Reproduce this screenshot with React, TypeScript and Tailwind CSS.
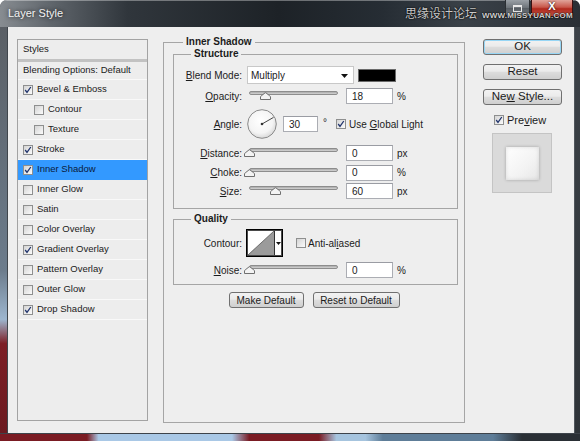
import React from "react";

const U = ({ children }: { children: React.ReactNode }) => (
  <span className="underline underline-offset-[1px]">{children}</span>
);

const Check = ({ on, cls = "" }: { on?: boolean; cls?: string }) => (
  <span
    className={
      "inline-flex items-center justify-center w-[10px] h-[10px] shrink-0 border border-[#8e8f8f] bg-[linear-gradient(135deg,#d4d4d4,#fbfbfb)] " +
      cls
    }
  >
    {on && (
      <svg width="8" height="8" viewBox="0 0 8 8">
        <path d="M1.2 4.0 L3.0 6.4 L6.8 1.0" stroke="#23366e" strokeWidth="1.3" fill="none" />
      </svg>
    )}
  </span>
);

const Slider = ({ pct }: { pct: number }) => (
  <div className="relative w-[89px] h-[16px] ml-[7px] shrink-0">
    <div className="absolute left-0 right-0 top-[3px] h-[4px] rounded-[2px] border border-[#8d8d8d] bg-[linear-gradient(to_bottom,#a9a9a9,#d4d4d4)]" />
    <svg
      className="absolute top-[4px]"
      style={{ left: Math.round(pct * 89) - 5 }}
      width="11"
      height="8"
      viewBox="0 0 11 8"
    >
      <path d="M0.5 7.5 V5 Q0.5 4.4 1.2 3.9 L5 0.9 Q5.5 0.5 6 0.9 L9.8 3.9 Q10.5 4.4 10.5 5 V7.5 Z" fill="#f3f3f3" stroke="#6f6f6f" />
    </svg>
  </div>
);

const Field = ({ v, w = "w-[47px]", cls = "ml-[8px]" }: { v: string; w?: string; cls?: string }) => (
  <div className={"h-[16px] border border-[#abadb3] border-t-[#9a9ca3] bg-white flex items-center pl-[5px] shrink-0 " + w + " " + cls}>
    {v}
  </div>
);

const Label = ({ children }: { children: React.ReactNode }) => (
  <div className="w-[68px] text-right shrink-0">{children}</div>
);

const Btn = ({ children, cls = "" }: { children: React.ReactNode; cls?: string }) => (
  <div
    className={
      "h-[16px] rounded-[3px] border border-[#707070] bg-[linear-gradient(to_bottom,#f2f2f2,#ebebeb_45%,#dddddd_50%,#cfcfcf)] flex items-center justify-center " +
      cls
    }
  >
    <span>{children}</span>
  </div>
);

const items: { t: string; on: boolean; ind?: boolean; sel?: boolean }[] = [
  { t: "Bevel & Emboss", on: true },
  { t: "Contour", on: false, ind: true },
  { t: "Texture", on: false, ind: true },
  { t: "Stroke", on: true },
  { t: "Inner Shadow", on: true, sel: true },
  { t: "Inner Glow", on: false },
  { t: "Satin", on: false },
  { t: "Color Overlay", on: false },
  { t: "Gradient Overlay", on: true },
  { t: "Pattern Overlay", on: false },
  { t: "Outer Glow", on: false },
  { t: "Drop Shadow", on: true },
];

export default function App() {
  return (
    <div className="w-[580px] h-[441px] bg-white font-['Liberation_Sans',Arial,sans-serif] text-[#1b1b1b]">
      <div className="w-[580px] h-[441px] rounded-t-[7px] overflow-hidden flex flex-col bg-[#3a4046]">
        {/* Title bar */}
        <div className="relative h-[27px] shrink-0 flex items-center pl-[8px] bg-[linear-gradient(to_right,#878c91_0%,#5f656b_9%,#30363c_22%,#1d2227_48%,#262d34_66%,#3a4148_80%,#2a2f35_100%)] shadow-[inset_0_1px_0_rgba(255,255,255,0.35)]">
          <span className="text-[11px] text-[#f2f2f2] [text-shadow:0_0_4px_rgba(0,0,0,0.9)]">Layer Style</span>
          <span className="absolute left-[405px] top-[6px] text-[12px] leading-[14px] text-[#c9c9c9] font-['Noto_Sans_CJK_SC',sans-serif] [text-shadow:0_0_2px_#000,0_0_1px_#000]">
            思缘设计论坛
          </span>
          {/* window buttons */}
          <div className="absolute right-[50px] top-0 w-[25px] h-[17px] rounded-bl-[4px] border border-t-0 border-[#2b2f33] bg-[linear-gradient(to_bottom,#9aa0a6,#6c7278_50%,#565c62_51%,#7b8187)] flex items-center justify-center">
            <div className="w-[9px] h-[7px] border border-[#e8e8e8] border-t-2" />
          </div>
          <div className="absolute right-[7px] top-0 w-[42px] h-[17px] rounded-br-[4px] border border-t-0 border-[#3b1010] bg-[linear-gradient(to_bottom,#e0a49a,#c8574a_45%,#b0281c_55%,#c9584a)] flex justify-center items-start pt-[2px]">
            <span className="text-[11px] font-bold leading-[8px] text-white [text-shadow:0_0_2px_#000]">X</span>
          </div>
          <span className="absolute left-[482px] top-[12px] text-[8px] leading-[8px] font-bold tracking-[0.2px] text-[#d0d0d0] [text-shadow:0_0_2px_#000,0_0_1px_#000]">
            WWW.MISSYUAN.COM
          </span>
        </div>

        {/* middle row: frame + client */}
        <div className="flex-1 flex min-h-0">
          <div className="w-[8px] shrink-0 bg-[linear-gradient(to_bottom,#5a5f65_0%,#6c7c8c_60%,#9db6cf_72%,#7d1e25_78%,#6b1a20_100%)] border-r border-[#40464c]" />
          <div className="flex-1 bg-[#eeeeee] flex items-start text-[10px]">
            {/* Left styles list */}
            <div className="mt-[12px] ml-[9px] w-[131px] h-[382px] shrink-0 border border-[#a3a3a3] bg-[#ededed] flex flex-col text-[9.5px]">
              <div className="h-[19px] flex items-center pl-[5px]">Styles</div>
              <div className="h-[3px] bg-[#c2c2c2]" />
              <div className="h-[18px] flex items-center pl-[5px] border-b border-[#f9f9f9]">Blending Options: Default</div>
              {items.map((it) => (
                <div
                  key={it.t}
                  className={
                    "h-[20px] flex items-center gap-[4px] border-b " +
                    (it.ind ? "pl-[16px] " : "pl-[5px] ") +
                    (it.sel ? "bg-[#3399ff] border-[#3399ff] text-[#0a1a3a]" : "border-[#f9f9f9]")
                  }
                >
                  <Check on={it.on} />
                  <span>{it.t}</span>
                </div>
              ))}
            </div>

            {/* Middle */}
            <fieldset className="mt-[9px] ml-[15px] w-[302px] h-[387px] shrink-0 border border-[#a5a5a5] m-0 p-0">
              <legend className="ml-[19px] px-[3px] font-bold text-[10px] leading-[12px]">Inner Shadow</legend>

              <fieldset className="ml-[9px] w-[285px] h-[161px] border border-[#a5a5a5] p-0">
                <legend className="ml-[17px] px-[3px] font-bold text-[10px] leading-[12px]">Structure</legend>
                <div className="pt-[4px] flex flex-col">
                  <div className="h-[22px] flex items-center">
                    <Label>
                      <U>B</U>lend Mode:
                    </Label>
                    <div className="ml-[5px] w-[107px] h-[18px] bg-white border border-[#c8c8c8] flex items-center pl-[3px] relative shrink-0">
                      Multiply
                      <svg className="absolute right-[5px] top-[7px]" width="7" height="4" viewBox="0 0 7 4">
                        <path d="M0 0 H7 L3.5 4 Z" fill="#111" />
                      </svg>
                    </div>
                    <div className="ml-[4px] w-[38px] h-[13px] bg-black border border-[#6a6a6a] shrink-0" />
                  </div>
                  <div className="h-[20px] flex items-center">
                    <Label>
                      <U>O</U>pacity:
                    </Label>
                    <Slider pct={0.18} />
                    <Field v="18" />
                    <span className="ml-[4px]">%</span>
                  </div>
                  <div className="h-[36px] flex items-center">
                    <Label>
                      <U>A</U>ngle:
                    </Label>
                    <svg className="ml-[5px] shrink-0" width="30" height="30" viewBox="0 0 30 30">
                      <defs>
                        <radialGradient id="dial" cx="0.45" cy="0.4" r="0.6">
                          <stop offset="0" stopColor="#ffffff" />
                          <stop offset="0.7" stopColor="#f4f4f4" />
                          <stop offset="1" stopColor="#d9d9d9" />
                        </radialGradient>
                      </defs>
                      <circle cx="15" cy="15" r="14.3" fill="url(#dial)" stroke="#8a8a8a" strokeWidth="1" />
                      <line x1="15" y1="15" x2="26.5" y2="8.4" stroke="#444" strokeWidth="1" />
                      <circle cx="15" cy="15" r="1.3" fill="#333" />
                    </svg>
                    <Field v="30" w="w-[35px]" cls="ml-[6px]" />
                    <span className="ml-[5px] -mt-[4px]">°</span>
                    <Check on cls="ml-[9px]" />
                    <span className="ml-[3px]">
                      Use <U>G</U>lobal Light
                    </span>
                  </div>
                  <div className="h-[22px] flex items-center">
                    <Label>
                      <U>D</U>istance:
                    </Label>
                    <Slider pct={0} />
                    <Field v="0" />
                    <span className="ml-[4px]">px</span>
                  </div>
                  <div className="h-[17px] flex items-center">
                    <Label>
                      <U>C</U>hoke:
                    </Label>
                    <Slider pct={0} />
                    <Field v="0" />
                    <span className="ml-[4px]">%</span>
                  </div>
                  <div className="h-[20px] flex items-center">
                    <Label>
                      <U>S</U>ize:
                    </Label>
                    <Slider pct={0.29} />
                    <Field v="60" />
                    <span className="ml-[4px]">px</span>
                  </div>
                </div>
              </fieldset>

              <fieldset className="mt-[4px] ml-[9px] w-[285px] h-[72px] border border-[#a5a5a5] p-0">
                <legend className="ml-[17px] px-[3px] font-bold text-[10px] leading-[12px]">Quality</legend>
                <div className="pt-[4px] flex flex-col">
                  <div className="h-[28px] flex items-center">
                    <Label>Contour:</Label>
                    <div className="ml-[4px] w-[37px] h-[28px] border border-black shadow-[inset_0_0_0_1px_#4a4a4a] bg-white flex shrink-0">
                      <svg className="ml-[1px] mt-[1px]" width="26" height="24" viewBox="0 0 26 24">
                        <path d="M0 24 L26 0 V24 Z" fill="#9b9b9b" />
                        <path d="M0 24 L26 0" stroke="#555" strokeWidth="0.8" />
                      </svg>
                      <div className="flex-1 border-l border-[#333] my-[1px] flex items-center justify-center">
                        <svg width="5" height="3" viewBox="0 0 5 3">
                          <path d="M0 0 H5 L2.5 3 Z" fill="#111" />
                        </svg>
                      </div>
                    </div>
                    <Check cls="ml-[13px]" />
                    <span className="ml-[2px]">
                      Anti-al<U>i</U>ased
                    </span>
                  </div>
                  <div className="mt-[3px] h-[20px] flex items-center">
                    <Label>
                      <U>N</U>oise:
                    </Label>
                    <Slider pct={0} />
                    <Field v="0" />
                    <span className="ml-[4px]">%</span>
                  </div>
                </div>
              </fieldset>

              <div className="mt-[7px] flex justify-center gap-[9px]">
                <Btn cls="w-[75px]">Make Default</Btn>
                <Btn cls="w-[87px]">Reset to Default</Btn>
              </div>
            </fieldset>

            {/* Right column */}
            <div className="mt-[12px] ml-[18px] w-[79px] shrink-0 flex flex-col text-[11.5px]">
              <Btn cls="border-[#3c7fb1] shadow-[inset_0_0_0_1px_#97d6f5]">OK</Btn>
              <Btn cls="mt-[9px]">Reset</Btn>
              <Btn cls="mt-[9px]">
                Ne<U>w</U> Style...
              </Btn>
              <div className="mt-[9px] h-[12px] pl-[11px] flex items-center gap-[3px] text-[11px]">
                <Check on />
                <span>
                  Pre<U>v</U>iew
                </span>
              </div>
              <div className="mt-[7px] ml-[9px] w-[60px] h-[60px] border border-[#c4c4c4] bg-[#dadada] flex items-center justify-center">
                <div className="w-[33px] h-[33px] bg-[linear-gradient(135deg,#ffffff,#f3f3f3_60%,#e6e6e6)] shadow-[0_0_3px_rgba(0,0,0,0.25),inset_0_0_4px_rgba(0,0,0,0.12)]" />
              </div>
            </div>
          </div>
          <div className="w-[6px] shrink-0 bg-[linear-gradient(to_bottom,#3c4248,#2e3338)] border-l border-[#50565c]" />
        </div>

        {/* bottom frame */}
        <div className="h-[8px] shrink-0 border-t border-[#3d434a] bg-[linear-gradient(to_right,#7a1b23_0%,#7a1b23_15%,#a9c8e6_17%,#a9c8e6_40%,#7a1b23_43%,#7a1b23_55%,#a6c4de_58%,#a6c4de_63%,#5e7d98_66%,#5e7d98_85%,#2a2f35_90%,#2a2f35_100%)]" />
      </div>
    </div>
  );
}
